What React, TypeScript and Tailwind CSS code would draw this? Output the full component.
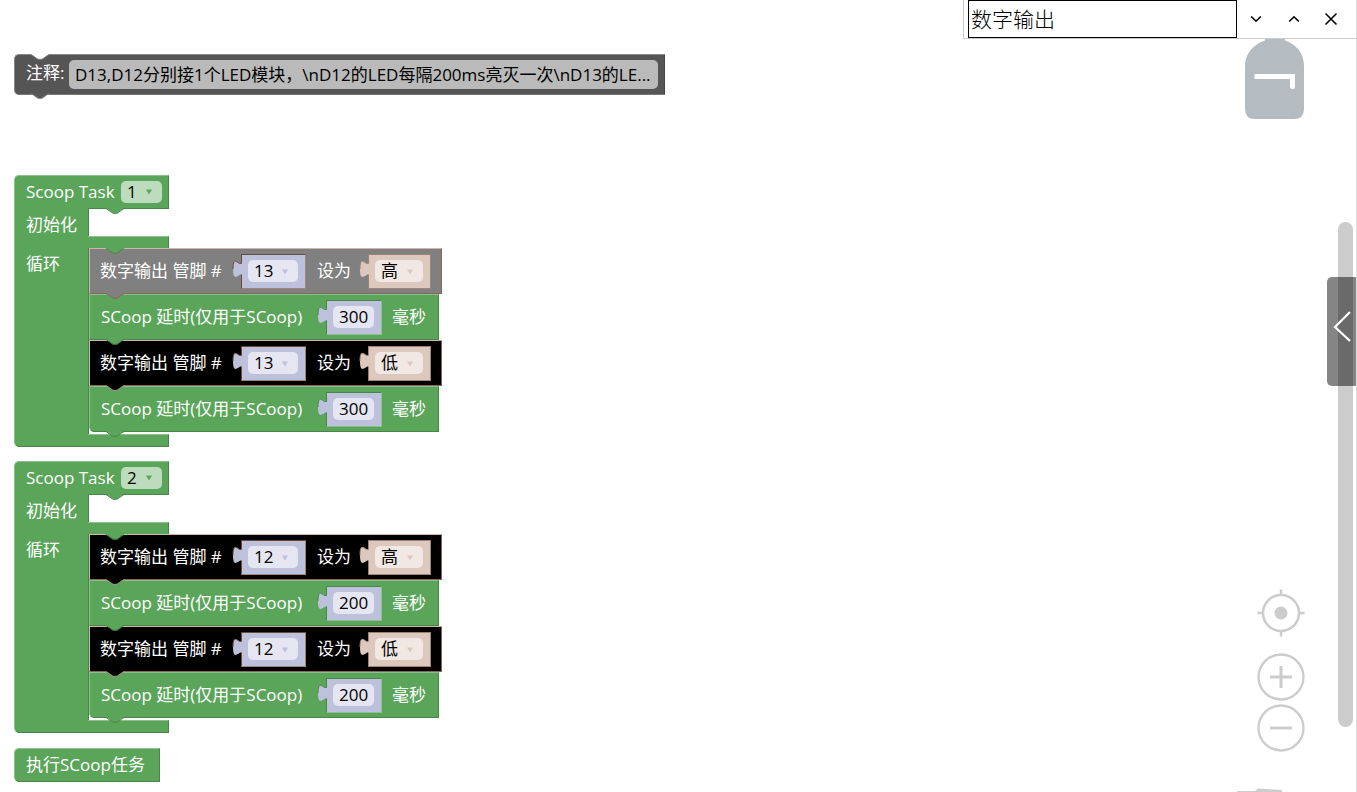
import { useState } from "react";

type Tone = { fill: string; edge: string };

const GREEN: Tone = { fill: "#5ba55b", edge: "#498449" };
const BLACK: Tone = { fill: "#000000", edge: "#a9897c" };
const GREY: Tone = { fill: "#808080", edge: "#8a6659" };
const SLATE: Tone = { fill: "#555555", edge: "#777777" };
const WHITE: Tone = { fill: "#ffffff", edge: "#888888" };

/* Connector bump; the parent sets where it hangs. */
function Bump({ tone, className }: { tone: Tone; className: string }) {
  return (
    <svg aria-hidden="true" width="18" height="6" viewBox="0 0 18 6" className={`absolute z-10 ${className}`}>
      <path d="M0 0L7 5H11L18 0Z" fill={tone.fill} />
      <path d="M0 .5L7 5.3H11L18 .5" fill="none" stroke={tone.edge} strokeWidth="1" />
    </svg>
  );
}

/* Puzzle tab on the left side of a value block. */
function Tab({ fill, edge }: { fill: string; edge: string }) {
  return (
    <svg
      aria-hidden="true"
      width="11"
      height="24"
      viewBox="0 0 11 24"
      className="absolute top-px right-full -mr-px"
    >
      <path d="M11 4H10.600C10.600 16 1 -5.600 1 13S10.600 10 10.600 22H11Z" fill={fill} />
      <path d="M9.600 5.500C8.500 13 1 -3.500 1 13" fill="none" stroke={edge} strokeWidth="1" />
    </svg>
  );
}

function Arrow({ className }: { className: string }) {
  return (
    <svg aria-hidden="true" width="8" height="6" viewBox="0 0 8 6" className={className}>
      <path d="M1 .5H7L4 5.500Z" fill="currentColor" />
    </svg>
  );
}

function TaskSelect({ initial }: { initial: string }) {
  const [value, setValue] = useState(initial);
  return (
    <span className="relative flex">
      <select
        aria-label="Scoop Task"
        value={value}
        onChange={(e) => setValue(e.target.value)}
        className="h-[22px] w-[41px] appearance-none rounded-[5px] bg-[#bddbbd] pl-1.5 leading-[22px] text-black"
      >
        <option>1</option>
        <option>2</option>
      </select>
      <Arrow className="pointer-events-none absolute top-2 right-[9px] text-[#5ba55b]" />
    </span>
  );
}

function PinValue({ initial }: { initial: string }) {
  const [value, setValue] = useState(initial);
  return (
    <span className="relative flex h-[35px] w-[65px] items-center border border-t-[#6b4a3e] border-r-[#a08478] border-b-[#a08478] border-l-[#6b4a3e] bg-[#bdc1db] pl-1.5">
      <Tab fill="#bdc1db" edge="#6b4a3e" />
      <select
        aria-label="管脚"
        value={value}
        onChange={(e) => setValue(e.target.value)}
        className="h-[22px] w-[50px] appearance-none rounded-[5px] bg-[#e5e6f1] pl-1.5 leading-[22px] text-black"
      >
        <option>12</option>
        <option>13</option>
      </select>
      <Arrow className="pointer-events-none absolute top-[14px] right-4 text-[#bdc1db]" />
    </span>
  );
}

function LevelValue({ initial }: { initial: string }) {
  const [value, setValue] = useState(initial);
  return (
    <span className="relative flex h-[35px] w-[63px] items-center border border-t-[#a08074] border-r-[#a08478] border-b-[#a08478] border-l-[#a08074] bg-[#ddc8be] pl-1.5">
      <Tab fill="#ddc8be" edge="#a08074" />
      <select
        aria-label="设为"
        value={value}
        onChange={(e) => setValue(e.target.value)}
        className="h-[22px] w-[48px] appearance-none rounded-[5px] bg-[#f1e8e4] pl-1.5 leading-[22px] text-black"
      >
        <option>高</option>
        <option>低</option>
      </select>
      <Arrow className="pointer-events-none absolute top-[14px] right-4 text-[#ddc8be]" />
    </span>
  );
}

function OutputBlock({ pin, level, dimmed }: { pin: string; level: string; dimmed?: boolean }) {
  return (
    <div
      className={`relative flex h-[46px] w-[353px] items-center border border-t-[#d0b5aa] border-r-[#8a6659] border-b-[#8a6659] border-l-[#d0b5aa] pl-[10px] ${
        dimmed ? "bg-[#808080]" : "bg-black"
      }`}
    >
      <span className="w-[141px]">数字输出 管脚 #</span>
      <PinValue initial={pin} />
      <span className="w-[62px] pl-[11px]">设为</span>
      <LevelValue initial={level} />
      <Bump tone={dimmed ? GREY : BLACK} className="top-full left-4" />
    </div>
  );
}

function DelayBlock({ ms, last }: { ms: string; last?: boolean }) {
  return (
    <div
      className={`relative flex h-[46px] w-[350px] items-center border border-t-[#8cc08c] border-r-[#498449] border-b-[#498449] border-l-[#8cc08c] bg-[#5ba55b] pl-[11px] ${
        last ? "rounded-bl-[5px]" : ""
      }`}
    >
      <span className="w-[225px]">SCoop 延时(仅用于SCoop)</span>
      <span className="relative flex h-[35px] w-[56px] items-center border border-t-[#498449] border-r-[#8cc08c] border-b-[#8cc08c] border-l-[#498449] bg-[#bdc1db] pl-1.5">
        <Tab fill="#bdc1db" edge="#498449" />
        <input
          aria-label="毫秒"
          defaultValue={ms}
          className="h-[22px] w-[41px] rounded-[5px] bg-[#e5e6f1] pl-1.5 leading-[22px] text-black"
        />
      </span>
      <span className="pl-[10px]">毫秒</span>
      <Bump tone={GREEN} className="top-full left-4" />
    </div>
  );
}

function TaskBlock({ id, pin, ms, firstDimmed }: { id: string; pin: string; ms: string; firstDimmed?: boolean }) {
  return (
    <section>
      <div className="relative flex h-[34px] w-[155px] items-center rounded-tl-[5px] border border-t-[#8cc08c] border-r-[#498449] border-b-[#498449] border-l-[#8cc08c] bg-[#5ba55b] pl-[11px]">
        <span className="w-[95px]">Scoop Task</span>
        <TaskSelect initial={id} />
        <Bump tone={GREEN} className="top-full left-[91px]" />
      </div>
      <div className="relative -my-px flex h-[29px]">
        <div className="flex w-[75px] items-center border-r border-l border-r-[#498449] border-l-[#8cc08c] bg-[#5ba55b] pt-1 pl-[11px]">
          初始化
        </div>
      </div>
      <div className="flex h-3 w-[155px]">
        <div className="w-[74px] border-l border-l-[#8cc08c] bg-[#5ba55b]" />
        <div className="relative flex-1 border-t border-r border-t-[#8cc08c] border-r-[#498449] bg-[#5ba55b]">
          <Bump tone={GREEN} className="top-full left-[18px]" />
        </div>
      </div>
      <div className="flex">
        <div className="w-[75px] border-r border-l border-r-[#498449] border-l-[#8cc08c] bg-[#5ba55b] pt-1 pl-[11px] leading-6">
          循环
        </div>
        <div className="pb-0.5">
          <OutputBlock pin={pin} level="高" dimmed={firstDimmed} />
          <DelayBlock ms={ms} />
          <OutputBlock pin={pin} level="低" />
          <DelayBlock ms={ms} last />
        </div>
      </div>
      <div className="flex h-[13px] w-[155px]">
        <div className="w-[74px] rounded-bl-[5px] border-b border-l border-b-[#498449] border-l-[#8cc08c] bg-[#5ba55b]" />
        <div className="flex-1 border-t border-r border-b border-t-[#8cc08c] border-r-[#498449] border-b-[#498449] bg-[#5ba55b]" />
      </div>
    </section>
  );
}

function SearchBar() {
  return (
    <form
      onSubmit={(e) => e.preventDefault()}
      className="absolute top-0 right-0 z-20 flex h-[39px] items-center border-b border-l border-[#cccccc] bg-white pr-[7px] pl-1"
    >
      <input
        aria-label="搜索"
        defaultValue="数字输出"
        className="h-[38px] w-[269px] border border-black bg-white px-0.5 pb-0.5 text-[21px] font-light text-black outline-none"
      />
      <button type="button" aria-label="下一个" className="flex h-9 w-[38px] items-center justify-center">
        <svg width="12" height="8" viewBox="0 0 12 8" fill="none" stroke="#000" strokeWidth="1.6">
          <path d="M1.200 1.500L6 6.200L10.800 1.500" />
        </svg>
      </button>
      <button type="button" aria-label="上一个" className="flex h-9 w-[38px] items-center justify-center">
        <svg width="12" height="8" viewBox="0 0 12 8" fill="none" stroke="#000" strokeWidth="1.6">
          <path d="M1.200 6.500L6 1.800L10.800 6.500" />
        </svg>
      </button>
      <button type="button" aria-label="关闭" className="flex h-9 w-9 items-center justify-center">
        <svg width="14" height="14" viewBox="0 0 14 14" fill="none" stroke="#000" strokeWidth="1.6">
          <path d="M1.500 1.500L12.500 12.500M12.500 1.500L1.500 12.500" />
        </svg>
      </button>
    </form>
  );
}

function Bottle() {
  return (
    <svg aria-hidden="true" width="60" height="82" viewBox="0 0 60 82" className="absolute top-[37px] right-[51px]">
      <path
        d="M20 0H40V3.500C51 7 59 16 59 29V72Q59 82 49 82H10Q0 82 0 72V29C0 16 9 7 20 3.500Z"
        fill="#b4bcc1"
      />
      <path d="M9.500 37H50V50Q50 52 47.500 52T45 50V42H9.500Z" fill="#fff" />
    </svg>
  );
}

function ZoomControls() {
  return (
    <div className="absolute right-[51px] bottom-10 flex flex-col items-center text-[#cccccc]">
      <button type="button" aria-label="居中" className="mb-4">
        <svg width="48" height="48" viewBox="0 0 48 48" fill="none" stroke="currentColor" strokeWidth="2.500" className="block">
          <circle cx="24" cy="24" r="18" />
          <circle cx="24" cy="24" r="6.500" fill="currentColor" stroke="none" />
          <path d="M24 .5V6M24 42V47.500M.5 24H6M42 24H47.500" />
        </svg>
      </button>
      <button type="button" aria-label="放大" className="mb-[3px]">
        <svg width="48" height="48" viewBox="0 0 48 48" fill="none" stroke="currentColor" strokeWidth="2.300" className="block">
          <circle cx="24" cy="24" r="22.500" />
          <path d="M24 13V35M13 24H35" strokeWidth="3" />
        </svg>
      </button>
      <button type="button" aria-label="缩小">
        <svg width="48" height="48" viewBox="0 0 48 48" fill="none" stroke="currentColor" strokeWidth="2.300" className="block">
          <circle cx="24" cy="24" r="22.500" />
          <path d="M13 24H35" strokeWidth="3" />
        </svg>
      </button>
    </div>
  );
}

export default function App() {
  return (
    <main className="relative min-h-screen overflow-hidden border-r border-[#dddddd] bg-white font-['Open_Sans','Noto_Sans_CJK_SC',sans-serif] text-[17px] leading-6 text-white">
      <div className="flex flex-col items-start pt-[54px] pl-[14px]">
        <div className="relative mb-20 flex h-[41px] w-[651px] items-center rounded-l-[5px] border border-t-[#888888] border-r-[#444444] border-b-[#777777] border-l-[#888888] bg-[#555555] pr-1.5 pl-[11px]">
          <Bump tone={WHITE} className="-top-px left-4" />
          <label htmlFor="note" className="w-[43px] shrink-0 pb-1">
            注释:
          </label>
          <input
            id="note"
            defaultValue="D13,D12分别接1个LED模块，\nD12的LED每隔200ms亮灭一次\nD13的LE..."
            className="h-[29px] min-w-0 flex-1 rounded-[5px] bg-[#bababa] px-1.5 pb-0.5 text-black"
          />
          <Bump tone={SLATE} className="top-full left-4 -mt-px" />
        </div>
        <div className="flex flex-col items-start gap-[14px]">
          <TaskBlock id="1" pin="13" ms="300" firstDimmed />
          <TaskBlock id="2" pin="12" ms="200" />
          <div className="mt-px flex h-[34px] w-[146px] items-center rounded-l-[5px] border border-t-[#8cc08c] border-r-[#498449] border-b-[#498449] border-l-[#8cc08c] bg-[#5ba55b] pl-[11px]">
            执行SCoop任务
          </div>
        </div>
      </div>

      <Bottle />
      <SearchBar />
      <ZoomControls />

      <div className="absolute top-[222px] right-[3px] bottom-[65px] w-[15px] rounded-full bg-[#cccccc]" />
      <button
        type="button"
        aria-label="展开侧栏"
        className="absolute top-[277px] -right-px flex h-[109px] w-[30px] items-center justify-center rounded-l-[5px] bg-black/48 pb-[10px]"
      >
        <svg width="20" height="34" viewBox="0 0 20 34" fill="none" stroke="#fff" strokeWidth="2.200">
          <path d="M18 2L3 17L18 31" />
        </svg>
      </button>

      <svg aria-hidden="true" width="50" height="4" viewBox="0 0 50 4" className="absolute right-[69px] bottom-0" fill="#cccccc">
        <path d="M0 3H18L20 4H0ZM17 4L21 .5L45 2V4Z" />
      </svg>
    </main>
  );
}
